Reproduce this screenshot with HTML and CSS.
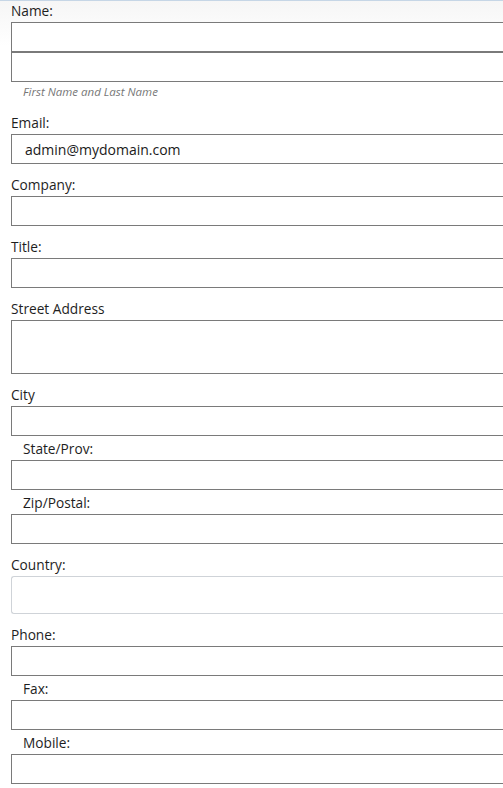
FILE: index.html
```html
<!DOCTYPE html>
<html>
<head>
<meta charset="utf-8">
<link rel="stylesheet" href="styles.css">
</head>
<body>
<form class="form">
  <label class="lbl lbl-first">Name:</label>
  <div class="stack">
    <input class="field" type="text">
    <input class="field" type="text">
  </div>
  <div class="hint">First Name and Last Name</div>

  <label class="lbl lbl-after-hint">Email:</label>
  <input class="field" type="text" value="admin@mydomain.com">

  <label class="lbl">Company:</label>
  <input class="field" type="text">

  <label class="lbl">Title:</label>
  <input class="field" type="text">

  <label class="lbl">Street Address</label>
  <textarea class="field area"></textarea>

  <label class="lbl">City</label>
  <input class="field" type="text">

  <label class="lbl lbl-sub">State/Prov:</label>
  <input class="field" type="text">

  <label class="lbl lbl-sub">Zip/Postal:</label>
  <input class="field" type="text">

  <label class="lbl">Country:</label>
  <div class="select"></div>

  <label class="lbl">Phone:</label>
  <input class="field" type="text">

  <label class="lbl lbl-sub">Fax:</label>
  <input class="field" type="text">

  <label class="lbl lbl-sub">Mobile:</label>
  <input class="field" type="text">
</form>
</body>
</html>
```

FILE: styles.css
```css
html, body {
  margin: 0;
  padding: 0;
  overflow: hidden;
  background: #ffffff;
}
body {
  border-top: 1px solid #c6d6e6;
  background: linear-gradient(#f6f6f6, #ffffff 45px);
  font-family: "Open Sans", "Noto Sans", sans-serif;
  font-size: 13.7px;
  color: #222222;
}
.form {
  display: flex;
  flex-direction: column;
  padding-left: 11px;
}
.lbl {
  display: block;
  height: 18px;
  line-height: 18px;
  padding-top: 2px;
  margin-top: 10px;
  margin-bottom: 2px;
  color: #1e1e1e;
}
.lbl-first {
  margin-top: -1px;
}
.lbl-after-hint {
  margin-top: 13px;
}
.lbl-sub {
  margin-top: 2px;
  padding-left: 12px;
}
.stack {
  display: flex;
  flex-direction: column;
}
.field {
  display: block;
  box-sizing: border-box;
  width: 100%;
  height: 30px;
  margin: 0;
  padding: 0 13px;
  border: 1px solid #7a7a7a;
  border-right: 0;
  border-radius: 0;
  background: #ffffff;
  font-family: "Open Sans", "Noto Sans", sans-serif;
  font-size: 14px;
  color: #1a1a1a;
  outline: none;
}
.area {
  height: 54px;
  resize: none;
}
.select {
  box-sizing: border-box;
  width: 100%;
  height: 38px;
  border: 1px solid #cfd3d8;
  border-right: 0;
  border-radius: 3px 0 0 3px;
  background: #ffffff;
}
.hint {
  margin-top: 3px;
  padding-left: 12px;
  height: 14px;
  line-height: 14px;
  font-size: 11.5px;
  font-style: italic;
  color: #777777;
}
```
